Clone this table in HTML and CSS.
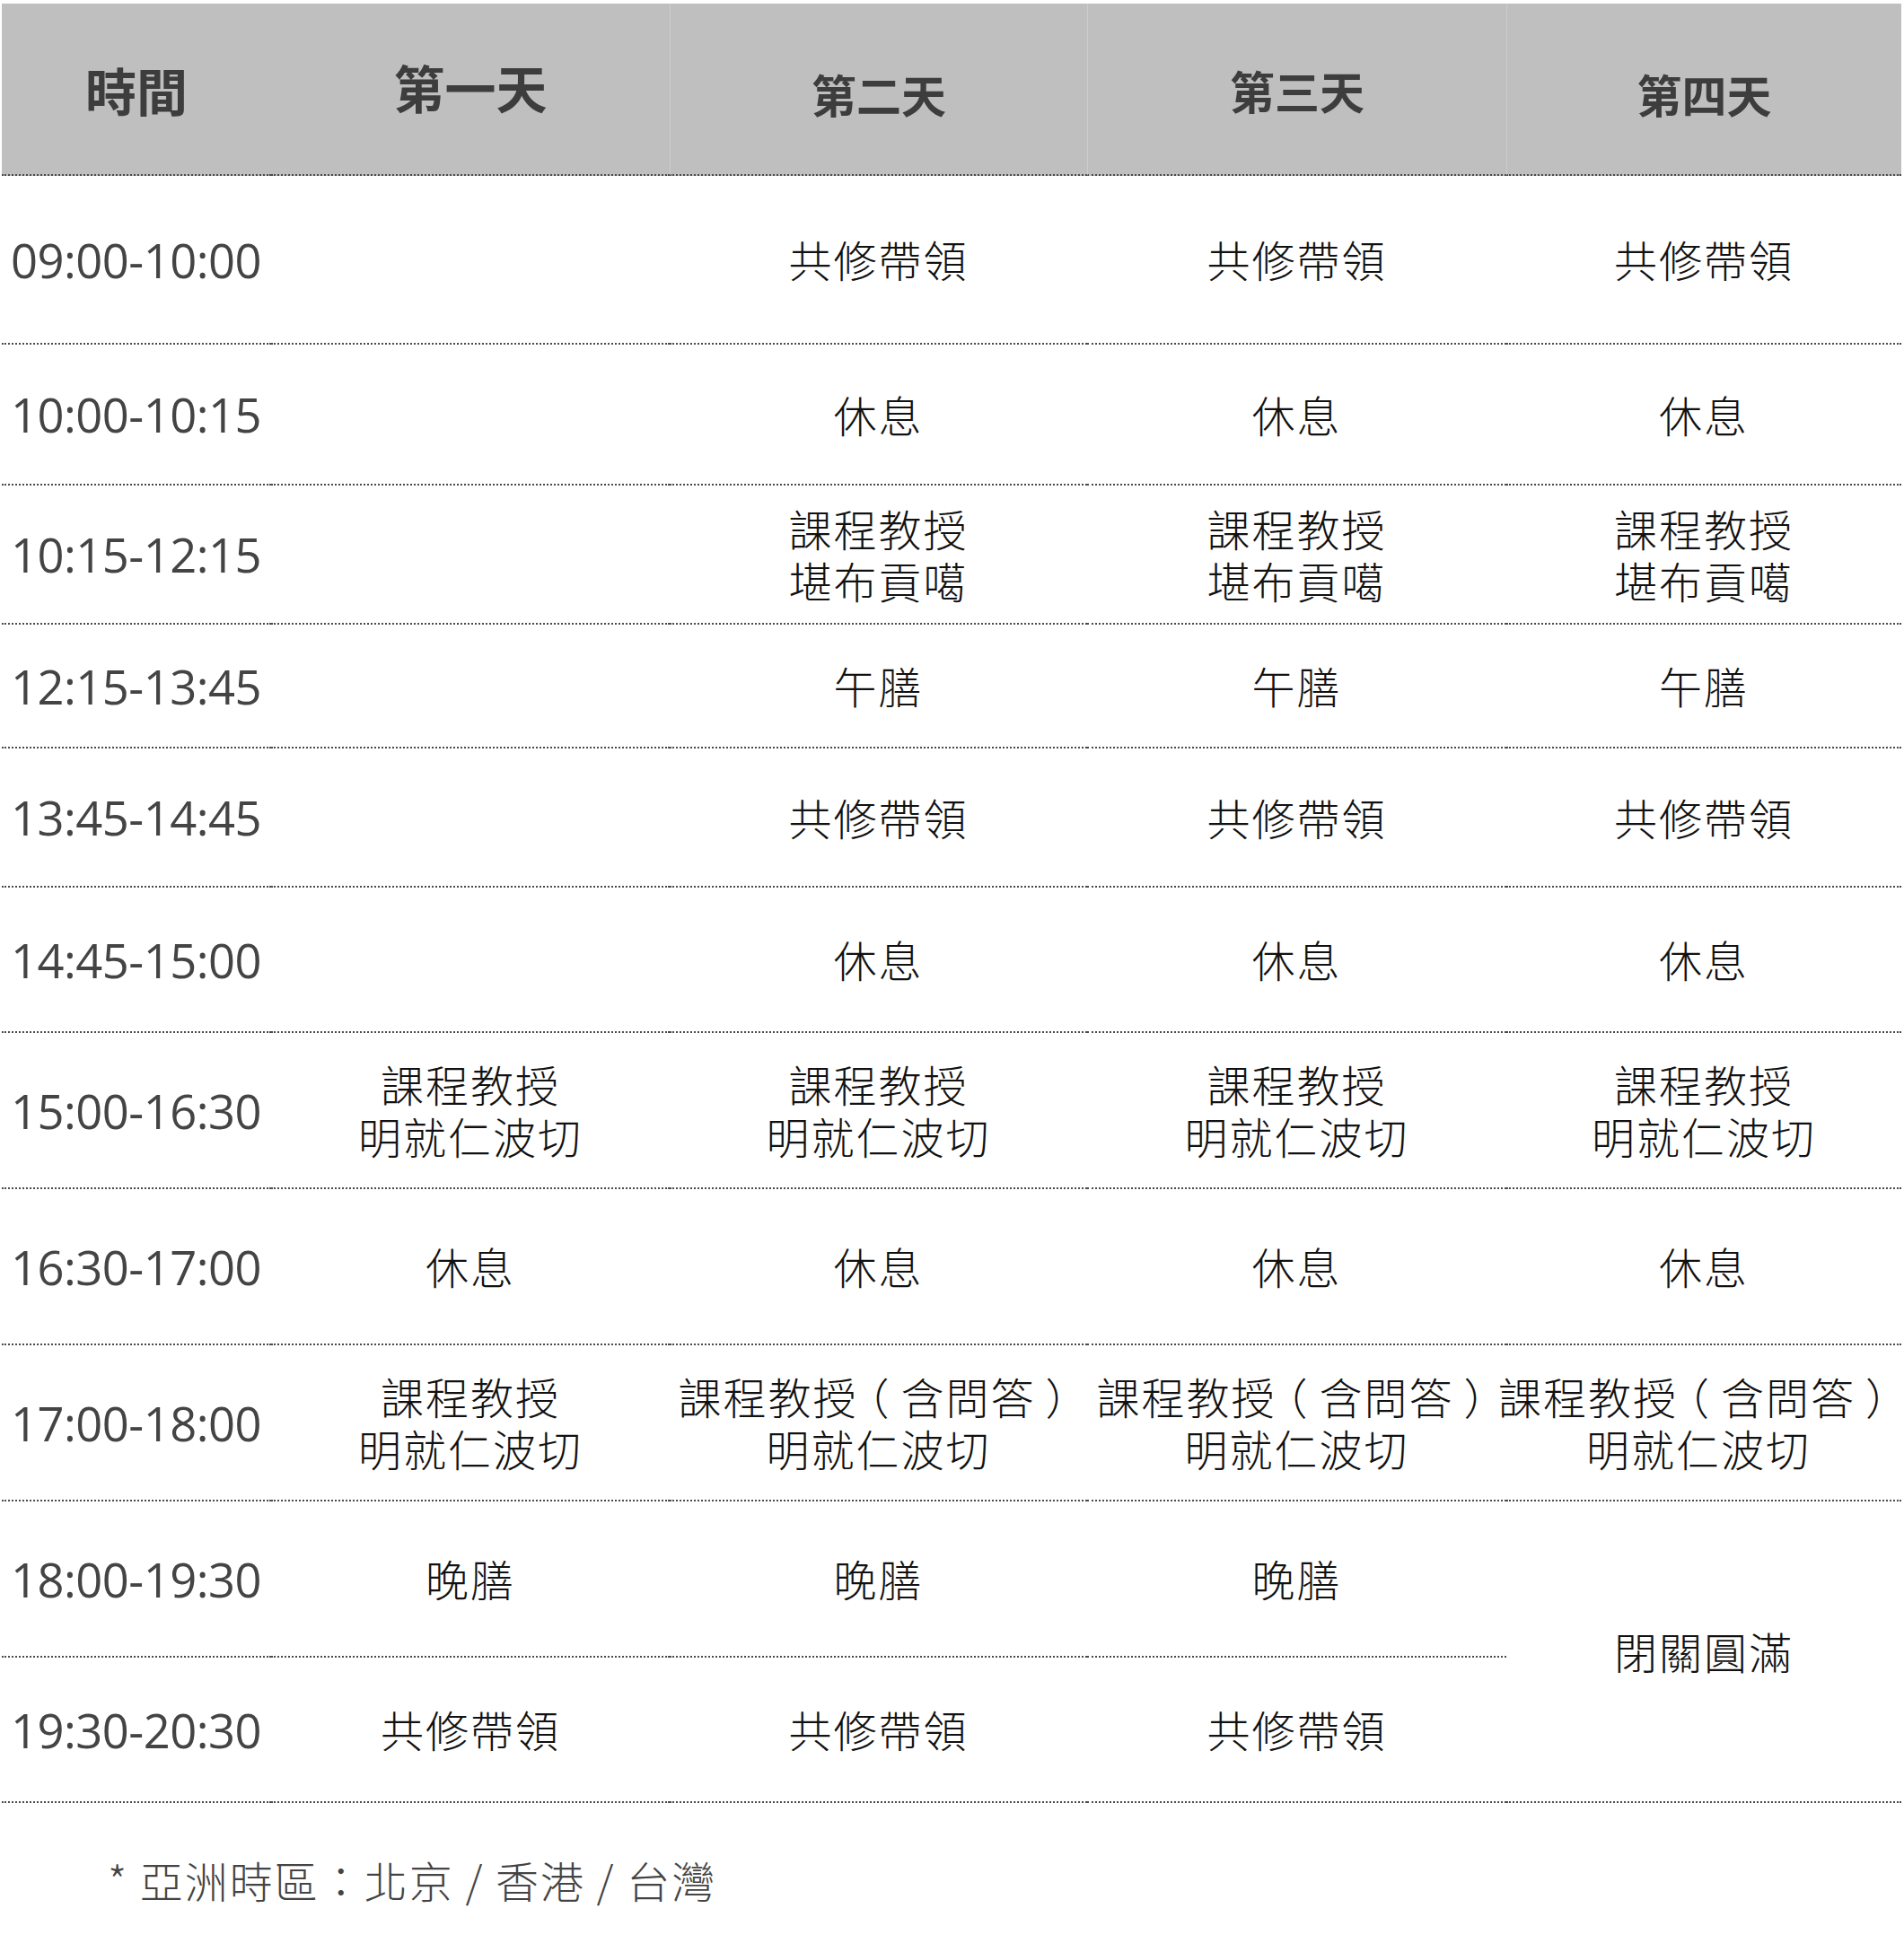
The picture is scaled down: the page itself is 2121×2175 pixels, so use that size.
FILE: index.html
```html
<!DOCTYPE html>
<html lang="zh-Hant">
<head>
<meta charset="utf-8">
<title>課程時間表</title>
<link rel="stylesheet" href="styles.css">
</head>
<body>
<div class="page">
  <div class="schedule">
    <div class="hd hd-time">時間</div>
    <div class="hd hd-d1">第一天</div>
    <div class="hd hd-sep hd-d2">第二天</div>
    <div class="hd hd-sep hd-d3">第三天</div>
    <div class="hd hd-sep hd-d4">第四天</div>

    <div class="time">09:00-10:00</div>
    <div class="cell"></div>
    <div class="cell"><span>共修帶領</span></div>
    <div class="cell"><span>共修帶領</span></div>
    <div class="cell"><span>共修帶領</span></div>

    <div class="time">10:00-10:15</div>
    <div class="cell"></div>
    <div class="cell"><span>休息</span></div>
    <div class="cell"><span>休息</span></div>
    <div class="cell"><span>休息</span></div>

    <div class="time">10:15-12:15</div>
    <div class="cell"></div>
    <div class="cell"><span>課程教授</span><span>堪布貢噶</span></div>
    <div class="cell"><span>課程教授</span><span>堪布貢噶</span></div>
    <div class="cell"><span>課程教授</span><span>堪布貢噶</span></div>

    <div class="time">12:15-13:45</div>
    <div class="cell"></div>
    <div class="cell"><span>午膳</span></div>
    <div class="cell"><span>午膳</span></div>
    <div class="cell"><span>午膳</span></div>

    <div class="time">13:45-14:45</div>
    <div class="cell"></div>
    <div class="cell"><span>共修帶領</span></div>
    <div class="cell"><span>共修帶領</span></div>
    <div class="cell"><span>共修帶領</span></div>

    <div class="time">14:45-15:00</div>
    <div class="cell"></div>
    <div class="cell"><span>休息</span></div>
    <div class="cell"><span>休息</span></div>
    <div class="cell"><span>休息</span></div>

    <div class="time">15:00-16:30</div>
    <div class="cell"><span>課程教授</span><span>明就仁波切</span></div>
    <div class="cell"><span>課程教授</span><span>明就仁波切</span></div>
    <div class="cell"><span>課程教授</span><span>明就仁波切</span></div>
    <div class="cell"><span>課程教授</span><span>明就仁波切</span></div>

    <div class="time">16:30-17:00</div>
    <div class="cell"><span>休息</span></div>
    <div class="cell"><span>休息</span></div>
    <div class="cell"><span>休息</span></div>
    <div class="cell"><span>休息</span></div>

    <div class="time">17:00-18:00</div>
    <div class="cell"><span>課程教授</span><span>明就仁波切</span></div>
    <div class="cell"><span>課程教授<span class="par">（</span>含問答<span class="par">）</span></span><span>明就仁波切</span></div>
    <div class="cell"><span>課程教授<span class="par">（</span>含問答<span class="par">）</span></span><span>明就仁波切</span></div>
    <div class="cell cell-last"><span>課程教授<span class="par">（</span>含問答<span class="par">）</span></span><span>明就仁波切</span></div>

    <div class="time">18:00-19:30</div>
    <div class="cell"><span>晚膳</span></div>
    <div class="cell"><span>晚膳</span></div>
    <div class="cell"><span>晚膳</span></div>
    <div class="cell cell-span"><span>閉關圓滿</span></div>

    <div class="time">19:30-20:30</div>
    <div class="cell"><span>共修帶領</span></div>
    <div class="cell"><span>共修帶領</span></div>
    <div class="cell"><span>共修帶領</span></div>
  </div>
  <p class="note">* 亞洲時區：北京 / 香港 / 台灣</p>
</div>
</body>
</html>
```

FILE: styles.css
```css
html, body {
  margin: 0;
  padding: 0;
  background: #ffffff;
}

.page {
  padding: 4px 0 0 2px;
  font-family: "Noto Sans CJK TC", "Noto Sans", sans-serif;
}

.schedule {
  display: grid;
  width: 2116px;
  grid-template-columns: 300px 444px 465px 467px 440px;
  grid-template-rows: 192px 188px 157px 155px 138px 155px 162px 174px 174px 174px 174px 162px;
}

.schedule > div {
  box-sizing: border-box;
  display: flex;
  align-items: center;
  justify-content: center;
  border-bottom: 2px dotted #4a4a4a;
}

.hd {
  background: #bfbfbf;
  color: #3d3d3d;
  font-weight: 700;
  font-size: 50px;
  line-height: 1.2;
}

.hd-time,
.hd-d1 {
  font-size: 57px;
}

.hd-d1 {
  padding-bottom: 6px;
}

.hd-d2,
.hd-d4 {
  padding-top: 10px;
}

.hd-d3 {
  padding-top: 2px;
}

.hd-sep {
  border-left: 1px solid #cdcdcd;
}

.time {
  justify-content: flex-start !important;
  padding-left: 10px;
  font-family: "Open Sans", "Liberation Sans", sans-serif;
  font-size: 52.5px;
  letter-spacing: -0.5px;
  color: #444444;
}

.schedule > .cell {
  flex-direction: column;
  align-items: center;
  justify-content: center;
  text-align: center;
  font-size: 48px;
  font-weight: 300;
  line-height: 1.2;
  letter-spacing: 2px;
  color: #111111;
  white-space: nowrap;
}

.schedule > .cell-last {
  padding-right: 12px;
}

.par {
  display: inline-block;
  width: 1em;
  text-align: center;
  font-feature-settings: "halt";
}

.cell-span {
  grid-row: span 2;
}

.note {
  margin: 57px 0 0 0;
  padding-left: 118px;
  font-size: 48px;
  font-weight: 300;
  line-height: 1.2;
  letter-spacing: 2px;
  color: #444444;
}
```
